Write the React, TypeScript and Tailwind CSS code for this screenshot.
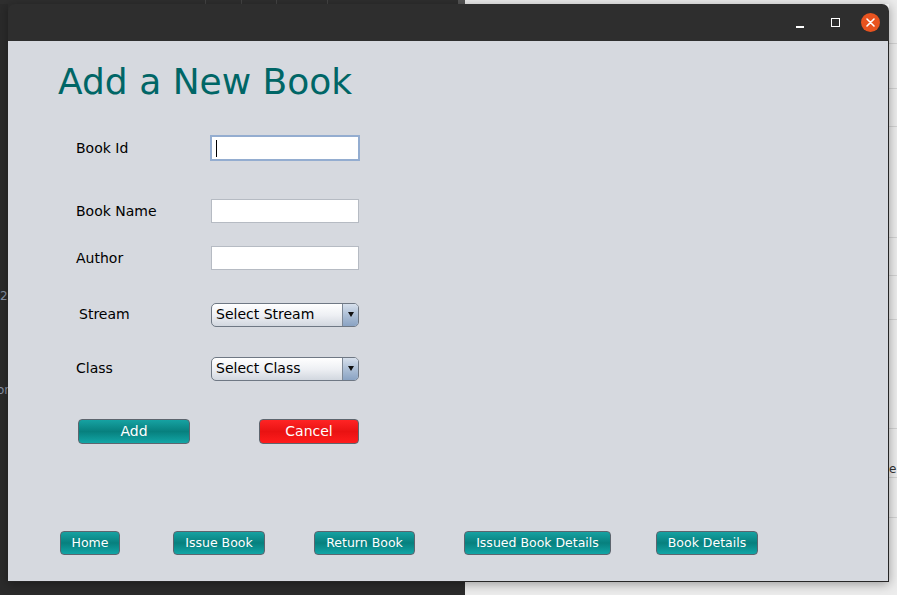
import React from "react";

const font = { fontFamily: '"DejaVu Sans", Verdana, sans-serif' };

type BtnProps = { label: string; className?: string; tone?: "teal" | "red" };
function NimbusButton({ label, className = "", tone = "teal" }: BtnProps) {
  const bg =
    tone === "red"
      ? "bg-linear-to-b from-[#ff2424] via-[#e91212] to-[#ff1c1c]"
      : "bg-linear-to-b from-[#16a2a2] via-[#07807e] to-[#12a6a6]";
  return (
    <button
      className={`flex items-center justify-center rounded-[4px] border border-[#5d656e] text-white ${bg} ${className}`}
    >
      {label}
    </button>
  );
}

function Combo({ label }: { label: string }) {
  return (
    <div className="flex h-[24px] w-[148px] overflow-hidden rounded-[5px] border border-[#6f7884] bg-linear-to-b from-[#ffffff] via-[#eef0f4] to-[#d2d7df]">
      <div className="flex flex-1 items-center pl-[4px] text-[14px] text-black">
        {label}
      </div>
      <div className="flex w-[16px] items-center justify-center border-l border-[#7d8896] bg-linear-to-b from-[#d7e0ec] via-[#adbfd6] to-[#8aa3c3]">
        <div className="h-0 w-0 border-x-[3.5px] border-t-[5px] border-x-transparent border-t-[#111]" />
      </div>
    </div>
  );
}

type RowProps = { label: string; children: React.ReactNode; className?: string; labelClass?: string };
function FormRow({ label, children, className = "", labelClass = "" }: RowProps) {
  return (
    <div className={`flex items-center ${className}`}>
      <div className={`w-[135px] text-[14px] text-black ${labelClass}`}>{label}</div>
      {children}
    </div>
  );
}

function TitleBar() {
  return (
    <div className="flex h-[37px] items-center justify-end rounded-t-[7px] bg-[#2e2e2e] pr-[9px]">
      <div className="mt-[9px] h-[1.5px] w-[8px] bg-white" />
      <div className="ml-[27px] h-[9px] w-[9px] border-[1.5px] border-white" />
      <div className="ml-[21px] flex h-[19px] w-[19px] items-center justify-center rounded-full bg-[#e8531f]">
        <svg width="9" height="9" viewBox="0 0 9 9">
          <path d="M1 1L8 8M8 1L1 8" stroke="white" strokeWidth="1.6" strokeLinecap="round" />
        </svg>
      </div>
    </div>
  );
}

export default function App() {
  const lines = [43, 88, 126, 237, 275, 319, 428, 477, 517];
  return (
    <div className="relative h-[595px] w-[897px] overflow-hidden bg-[#2b2b2b]" style={font}>
      {/* desktop behind the window */}
      <div className="absolute left-[465px] top-0 h-[595px] w-[432px] bg-[#ececec]">
        {lines.map((y) => (
          <div key={y} className="absolute left-0 right-0 h-px bg-[#d2d2d2]" style={{ top: y }} />
        ))}
        <div className="absolute left-[424px] top-[463px] text-[12px] leading-none text-[#333]">e:</div>
      </div>
      <div className="absolute left-0 top-0 flex h-[4px] w-[465px] bg-[#2f2f2f]">
        <div className="ml-[205px] h-[4px] w-px bg-[#444]" />
        <div className="ml-[35px] h-[4px] w-px bg-[#444]" />
        <div className="ml-[35px] h-[4px] w-px bg-[#444]" />
        <div className="ml-[50px] h-[4px] w-px bg-[#444]" />
        <div className="ml-[130px] h-[4px] w-[12px] bg-[#555]" />
      </div>
      <div className="absolute left-0 top-[290px] text-[12px] leading-none text-[#8a93a6]">2</div>
      <div className="absolute left-[-3px] top-[384px] text-[12px] leading-none text-[#8a93a6]">or</div>

      {/* window */}
      <div className="absolute left-[8px] top-[4px] w-[881px] shadow-[0_2px_10px_rgba(0,0,0,0.35)]">
        <TitleBar />
        <div className="flex h-[541px] flex-col border-b border-r border-[#262626] bg-[#d6d9df] pl-[50px]">
          <div className="mt-[20px] h-[42px] text-[36px] leading-[42px] text-[#006666]">
            Add a New Book
          </div>

          <div className="flex flex-col pl-[18px]">
            <FormRow label="Book Id" className="mt-[32px] h-[26px]">
              <div className="ml-[-1px] flex h-[26px] w-[150px] items-center border-2 border-[#94add0] bg-white pl-[4px]">
                <div className="h-[17px] w-px bg-black" />
              </div>
            </FormRow>
            <FormRow label="Book Name" className="mt-[38px] h-[24px]">
              <div className="h-[24px] w-[148px] border border-[#b6bbc3] bg-white" />
            </FormRow>
            <FormRow label="Author" className="mt-[23px] h-[24px]">
              <div className="h-[24px] w-[148px] border border-[#b6bbc3] bg-white" />
            </FormRow>
            <FormRow label="Stream" className="mt-[33px] h-[23px]" labelClass="pl-[3px]">
              <Combo label="Select Stream" />
            </FormRow>
            <FormRow label="Class" className="mt-[31px] h-[23px]">
              <Combo label="Select Class" />
            </FormRow>

            <div className="mt-[39px] flex h-[25px] text-[14px]">
              <NimbusButton label="Add" className="ml-[2px] h-[25px] w-[112px]" />
              <NimbusButton label="Cancel" tone="red" className="ml-[69px] h-[25px] w-[100px]" />
            </div>
          </div>

          <div className="mt-[87px] flex h-[24px] text-[12.5px]">
            <NimbusButton label="Home" className="ml-[2px] h-[24px] w-[60px]" />
            <NimbusButton label="Issue Book" className="ml-[53px] h-[24px] w-[92px]" />
            <NimbusButton label="Return Book" className="ml-[49px] h-[24px] w-[101px]" />
            <NimbusButton label="Issued Book Details" className="ml-[49px] h-[24px] w-[147px]" />
            <NimbusButton label="Book Details" className="ml-[45px] h-[24px] w-[102px]" />
          </div>
        </div>
      </div>
    </div>
  );
}
